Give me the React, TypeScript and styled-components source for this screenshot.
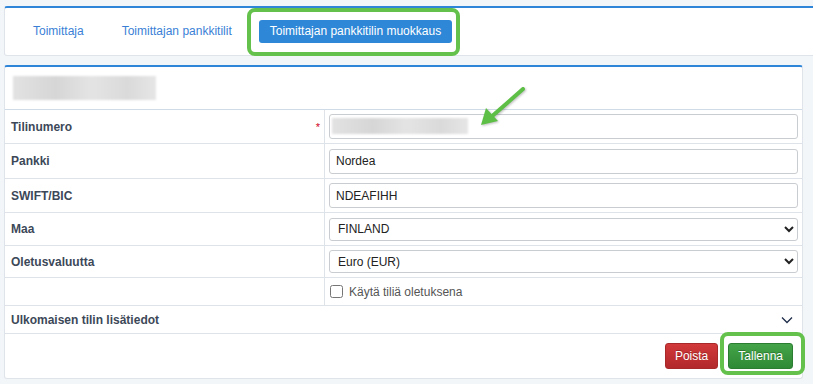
import React from 'react';
import styled, { createGlobalStyle } from 'styled-components';

const GlobalStyle = createGlobalStyle`
  body {
    margin: 0;
    background-color: #f3f6f9;
    font-family: "Liberation Sans", Arial, sans-serif;
    font-size: 12px;
  }
`;

const Page = styled.div`
  position: relative;
  width: 813px;
  height: 384px;
  overflow: hidden;
  padding: 6px 0 0 4px;
  box-sizing: border-box;
`;

const NavCard = styled.div`
  display: flex;
  align-items: center;
  gap: 16px;
  width: 830px;
  height: 50px;
  padding-left: 17px;
  box-sizing: border-box;
  background-color: #fff;
  border: 1px solid #dfe4ea;
  border-top: 2px solid #2f86d9;
  border-radius: 3px;
`;

const Tab = styled.a<{ $active?: boolean }>`
  display: block;
  padding: 5px 11px 6px;
  border-radius: 3px;
  text-decoration: none;
  font-size: 12px;
  line-height: 12px;
  color: ${(p) => (p.$active ? '#fff' : '#3a7fd6')};
  background-color: ${(p) => (p.$active ? '#2e87d7' : 'transparent')};
  cursor: pointer;
`;

const Highlight = styled.div<{ $inset: string }>`
  position: relative;

  &::after {
    content: '';
    position: absolute;
    inset: ${(p) => p.$inset};
    border: 4px solid #64c14b;
    border-radius: 8px;
    pointer-events: none;
  }
`;

const FormCard = styled.div`
  margin-top: 9px;
  width: 797px;
  background-color: #fff;
  border: 1px solid #dfe4ea;
  border-top: 2px solid #2f86d9;
  border-radius: 3px;
`;

const CardHeader = styled.div`
  display: flex;
  align-items: center;
  height: 42px;
  padding-left: 8px;
  border-bottom: 1px solid #cfdbe6;
`;

const Blurred = styled.div<{ $w: number; $h: number }>`
  width: ${(p) => p.$w}px;
  height: ${(p) => p.$h}px;
  background: linear-gradient(90deg, #e2e2e2 0%, #d6d6d6 30%, #e4e4e4 55%, #dadada 80%, #e6e6e6 100%);
  filter: blur(1px);
`;

const Row = styled.div<{ $h: number }>`
  display: grid;
  grid-template-columns: 320px 1fr;
  height: ${(p) => p.$h}px;
  border-bottom: 1px solid #dde3e9;
`;

const LabelCell = styled.div`
  display: flex;
  align-items: center;
  justify-content: space-between;
  padding: 0 4px 0 6px;
  border-right: 1px solid #dde3e9;
  font-weight: bold;
  color: #3c4858;
`;

const Required = styled.span`
  color: #d0021b;
  font-weight: normal;
  font-size: 11px;
`;

const ValueCell = styled.div`
  display: flex;
  align-items: center;
  padding: 0 4px;
`;

const FieldWrap = styled.div`
  position: relative;
  flex: 1;
`;

const Input = styled.input`
  width: 100%;
  height: 25px;
  box-sizing: border-box;
  padding: 0 6px;
  border: 1px solid #c9cdd1;
  border-radius: 3px;
  font-family: "Liberation Sans", Arial, sans-serif;
  font-size: 12px;
  color: #222;
  background: #fff;
  outline: none;
`;

const FieldBlur = styled(Blurred)`
  position: absolute;
  left: 3px;
  top: 4px;
`;

const Select = styled.select`
  flex: 1;
  height: 23px;
  box-sizing: border-box;
  padding: 0 4px;
  border: 1px solid #c9cdd1;
  border-radius: 3px;
  font-family: "Liberation Sans", Arial, sans-serif;
  font-size: 12px;
  color: #222;
  background: #fff;
  outline: none;
`;

const CheckLabel = styled.label`
  display: flex;
  align-items: center;
  gap: 6px;
  color: #555;
  font-size: 12px;
`;

const CheckBox = styled.input`
  width: 13px;
  height: 13px;
  margin: 0 0 0 1px;
`;

const Collapse = styled.div`
  display: flex;
  align-items: center;
  justify-content: space-between;
  height: 27px;
  padding: 0 9px 0 6px;
  border-bottom: 1px solid #dde3e9;
  font-weight: bold;
  color: #3c4858;
`;

const Footer = styled.div`
  display: flex;
  justify-content: flex-end;
  align-items: center;
  gap: 10px;
  height: 44px;
  padding: 0 9px 0 0;
`;

const Button = styled.button<{ $tone: 'danger' | 'success' }>`
  height: 26px;
  padding: 0 9px;
  border-radius: 3px;
  font-family: "Liberation Sans", Arial, sans-serif;
  font-size: 12px;
  color: #fff;
  text-shadow: 0 -1px 0 rgba(0, 0, 0, 0.25);
  cursor: pointer;
  border: 1px solid ${(p) => (p.$tone === 'danger' ? '#a8292a' : '#2b7d32')};
  background: ${(p) =>
    p.$tone === 'danger'
      ? 'linear-gradient(#d2393a, #b1282b)'
      : 'linear-gradient(#44a348, #2f8a35)'};
`;

const Arrow = styled.svg`
  position: absolute;
  left: 476px;
  top: 84px;
  filter: drop-shadow(1px 1px 1px rgba(0, 0, 0, 0.25));
`;

const Chevron = () => (
  <svg width="12" height="8" viewBox="0 0 12 8">
    <path d="M1 1.5 L6 6.5 L11 1.5" fill="none" stroke="#1f2d4a" strokeWidth="1.3" />
  </svg>
);

const App: React.FC = () => {
  return (
    <Page>
      <GlobalStyle />
      <NavCard>
        <Tab href="#">Toimittaja</Tab>
        <Tab href="#">Toimittajan pankkitilit</Tab>
        <Highlight $inset="-12px -8px -13px -12px">
          <Tab href="#" $active>
            Toimittajan pankkitilin muokkaus
          </Tab>
        </Highlight>
      </NavCard>

      <FormCard>
        <CardHeader>
          <Blurred $w={143} $h={24} />
        </CardHeader>

        <Row $h={33}>
          <LabelCell>
            Tilinumero <Required>*</Required>
          </LabelCell>
          <ValueCell>
            <FieldWrap>
              <Input readOnly defaultValue="" />
              <FieldBlur $w={136} $h={16} />
            </FieldWrap>
          </ValueCell>
        </Row>
        <Row $h={34}>
          <LabelCell>Pankki</LabelCell>
          <ValueCell>
            <Input readOnly defaultValue="Nordea" />
          </ValueCell>
        </Row>
        <Row $h={33}>
          <LabelCell>SWIFT/BIC</LabelCell>
          <ValueCell>
            <Input readOnly defaultValue="NDEAFIHH" />
          </ValueCell>
        </Row>
        <Row $h={32}>
          <LabelCell>Maa</LabelCell>
          <ValueCell>
            <Select defaultValue="FI">
              <option value="FI">FINLAND</option>
            </Select>
          </ValueCell>
        </Row>
        <Row $h={31}>
          <LabelCell>Oletusvaluutta</LabelCell>
          <ValueCell>
            <Select defaultValue="EUR">
              <option value="EUR">Euro (EUR)</option>
            </Select>
          </ValueCell>
        </Row>
        <Row $h={27}>
          <LabelCell />
          <ValueCell>
            <CheckLabel>
              <CheckBox type="checkbox" />
              Käytä tiliä oletuksena
            </CheckLabel>
          </ValueCell>
        </Row>

        <Collapse>
          Ulkomaisen tilin lisätiedot
          <Chevron />
        </Collapse>

        <Footer>
          <Button $tone="danger">Poista</Button>
          <Highlight $inset="-11px -12px -6px -8px">
            <Button $tone="success">Tallenna</Button>
          </Highlight>
        </Footer>
      </FormCard>

      <Arrow width="52" height="46" viewBox="0 0 52 46">
        <line x1="47" y1="5" x2="14" y2="34" stroke="#5dbf45" strokeWidth="4" strokeLinecap="round" />
        <polygon points="5,41 10,24 22,37" fill="#5dbf45" />
      </Arrow>
    </Page>
  );
};

export default App;
